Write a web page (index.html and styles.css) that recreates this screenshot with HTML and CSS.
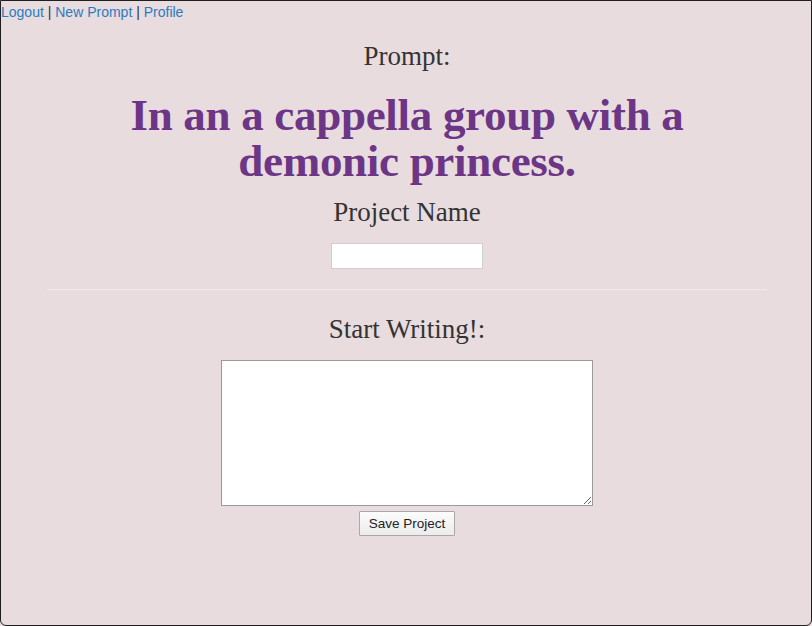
FILE: index.html
```html
<!DOCTYPE html>
<html lang="en">
<head>
<meta charset="utf-8">
<title>New Project</title>
<link rel="stylesheet" href="styles.css">
</head>
<body>
<div class="frame">
  <nav class="topnav">
    <a href="#">Logout</a> | <a href="#">New Prompt</a> | <a href="#">Profile</a>
  </nav>
  <main class="container">
    <h3 class="label label-prompt">Prompt:</h3>
    <h1 class="prompt">In an a cappella group with a<br>demonic princess.</h1>
    <h3 class="label label-name">Project Name</h3>
    <input class="name-input" type="text">
    <hr class="divider">
    <h3 class="label label-write">Start Writing!:</h3>
    <textarea class="writing"></textarea>
    <button class="save" type="button">Save Project</button>
  </main>
</div>
</body>
</html>
```

FILE: styles.css
```css
html, body {
  margin: 0;
  padding: 0;
  background: #e8dcdf;
}
body {
  font-family: "Liberation Sans", Arial, sans-serif;
  font-size: 14px;
  line-height: 20px;
  color: #333;
}
.frame {
  box-sizing: border-box;
  height: 626px;
  border: 1px solid #1f1f1f;
  border-radius: 0 0 6px 6px;
  background: #e8dcdf;
  overflow: hidden;
}
.topnav {
  height: 20px;
  margin-top: 1px;
  color: #333;
}
.topnav a {
  color: #2b7bbd;
  text-decoration: none;
}
.container {
  width: 720px;
  margin: 0 0 0 46px;
  display: flex;
  flex-direction: column;
  align-items: center;
}
.label {
  font-family: "Liberation Serif", "Times New Roman", serif;
  font-weight: normal;
  font-size: 27px;
  line-height: 30px;
  color: #333;
  margin: 0;
}
.label-prompt {
  margin-top: 19px;
}
.prompt {
  font-family: "Liberation Serif", "Times New Roman", serif;
  font-weight: bold;
  font-size: 45px;
  line-height: 46px;
  color: #6d3586;
  text-align: center;
  margin: 21px 0 0;
  letter-spacing: -0.3px;
}
.label-name {
  margin-top: 13px;
}
.name-input {
  box-sizing: border-box;
  width: 152px;
  height: 26px;
  margin-top: 16px;
  border: 1px solid #cfcfcf;
  background: #fff;
  padding: 2px 4px;
}
.divider {
  align-self: stretch;
  border: 0;
  border-top: 1px solid #f1eaec;
  margin: 20px 0 0;
}
.label-write {
  margin-top: 24px;
}
.writing {
  box-sizing: border-box;
  width: 372px;
  height: 146px;
  margin-top: 16px;
  border: 1px solid #9a9a9a;
  background: #fff;
  display: block;
}
.save {
  box-sizing: border-box;
  width: 96px;
  height: 25px;
  margin-top: 5px;
  font-family: "Liberation Sans", Arial, sans-serif;
  font-size: 13.5px;
  color: #222;
  background: linear-gradient(#fcfcfc, #ececec);
  border: 1px solid #a9a9a9;
  border-radius: 1px;
  padding: 0;
}
```
